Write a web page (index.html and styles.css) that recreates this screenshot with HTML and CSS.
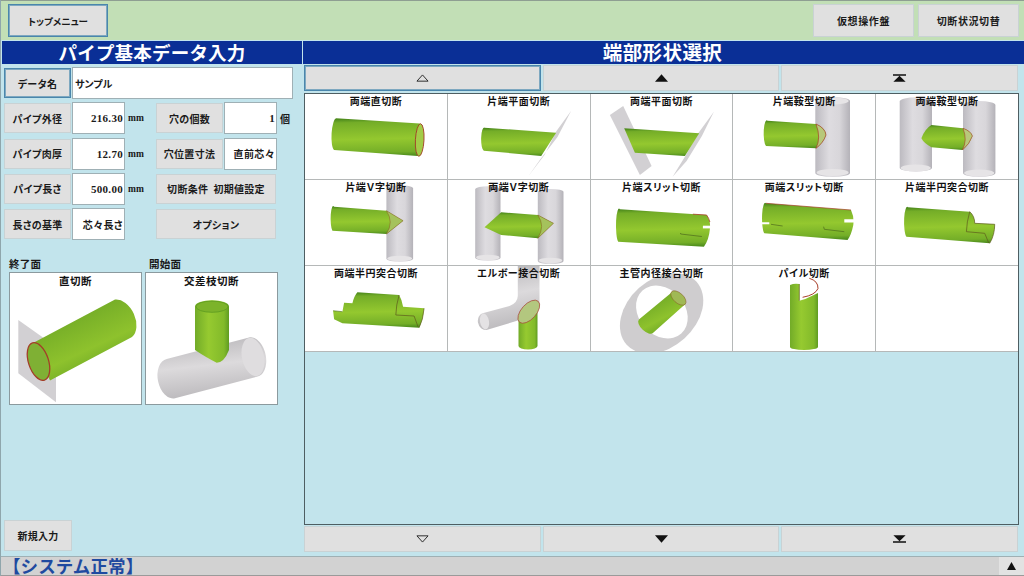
FILE: index.html
```html
<!DOCTYPE html>
<html lang="ja">
<head>
<meta charset="utf-8">
<title>パイプ基本データ入力</title>
<link rel="stylesheet" href="styles.css">
</head>
<body>
<svg class="defs" aria-hidden="true">
  <defs>
    <linearGradient id="gh" x1="0.47" y1="0" x2="0.53" y2="1">
      <stop offset="0" stop-color="#4c8a1c"/><stop offset=".1" stop-color="#74ad28"/><stop offset=".55" stop-color="#94c82f"/><stop offset=".9" stop-color="#74ae28"/><stop offset="1" stop-color="#4f8e1e"/>
    </linearGradient>
    <linearGradient id="gv" x1="0" y1="0" x2="1" y2="0">
      <stop offset="0" stop-color="#72ab28"/><stop offset=".4" stop-color="#96ca30"/><stop offset=".85" stop-color="#82ba2a"/><stop offset="1" stop-color="#5f9c22"/>
    </linearGradient>
    <linearGradient id="gd" x1="0.2" y1="0" x2="0.8" y2="1">
      <stop offset="0" stop-color="#4c8a1c"/><stop offset=".15" stop-color="#6fa826"/><stop offset=".6" stop-color="#8ec22d"/><stop offset="1" stop-color="#5a9820"/>
    </linearGradient>
    <linearGradient id="gy" x1="0" y1="0" x2="1" y2="0">
      <stop offset="0" stop-color="#bcbac0"/><stop offset=".4" stop-color="#dedce0"/><stop offset=".7" stop-color="#d8d6da"/><stop offset="1" stop-color="#b4b2b8"/>
    </linearGradient>
    <linearGradient id="gyh" x1="0.4" y1="0" x2="0.6" y2="1">
      <stop offset="0" stop-color="#bab8bb"/><stop offset=".45" stop-color="#dcdadc"/><stop offset="1" stop-color="#b8b6b9"/>
    </linearGradient>
  </defs>
</svg>

<div class="app">
  <header class="topbar">
    <button class="btn btn-focus top-menu">トップメニュー</button>
    <div class="top-right">
      <button class="btn top-btn">仮想操作盤</button>
      <button class="btn top-btn">切断状況切替</button>
    </div>
  </header>

  <main class="main">
    <section class="left">
      <h1 class="heading">パイプ基本データ入力</h1>
      <div class="form">
        <button class="btn btn-focus label">データ名</button>
        <div class="field field-name">サンプル</div>

        <button class="btn label">パイプ外径</button>
        <div class="field num">216.30</div>
        <span class="unit">mm</span>
        <button class="btn label">穴の個数</button>
        <div class="field num">1</div>
        <span class="unit unit-jp">個</span>

        <button class="btn label">パイプ肉厚</button>
        <div class="field num">12.70</div>
        <span class="unit">mm</span>
        <button class="btn label">穴位置寸法</button>
        <div class="field txt">直前芯々</div>
        <span></span>

        <button class="btn label">パイプ長さ</button>
        <div class="field num">500.00</div>
        <span class="unit">mm</span>
        <button class="btn label wide">切断条件&nbsp;&nbsp;初期値設定</button>
        <span></span>

        <button class="btn label">長さの基準</button>
        <div class="field txt">芯々長さ</div>
        <span></span>
        <button class="btn label wide">オプション</button>
        <span></span>
      </div>

      <div class="faces">
        <div class="face">
          <div class="face-label">終了面</div>
          <div class="card">
            <svg class="art" viewBox="10 273 131 131">
              <path d="M18.3 320 L56 346.7 V402.3 L18.3 373.3Z" fill="#d2d0d3"/>
              <path d="M33 343 L115 299.5 A14 21 -25 0 1 132 337 L50 380.5Z" fill="url(#gd)"/>
              <ellipse cx="38.5" cy="361.5" rx="10" ry="19.5" transform="rotate(-18 38.5 361.5)" fill="#7fb034" stroke="#a33e28" stroke-width="1.3"/>
            </svg>
            <div class="caption caption-card">直切断</div>
          </div>
        </div>
        <div class="face">
          <div class="face-label face-label-start">開始面</div>
          <div class="card">
            <svg class="art" viewBox="146 273 131 131">
              <path d="M166.7 359 L250 337.3 A12.5 20 -12 0 1 256.7 376.7 L175 398.3 A13 20 -12 0 1 166.7 359Z" fill="url(#gyh)"/>
              <ellipse cx="253" cy="357" rx="11" ry="19.5" transform="rotate(-12 253 357)" fill="#dfdddf"/>
              <path d="M195 306.7 A17 6.5 0 0 1 229 306.7 V350 Q224 362.7 216.7 362.7 Q207 358 195 350Z" fill="url(#gv)"/>
              <ellipse cx="212" cy="306.7" rx="16" ry="5.6" fill="#7cb32a" stroke="#5d9a20" stroke-width=".8"/>
            </svg>
            <div class="caption caption-card">交差枝切断</div>
          </div>
        </div>
      </div>

      <button class="btn new-entry">新規入力</button>
    </section>

    <section class="right">
      <h2 class="heading heading-right">端部形状選択</h2>
      <div class="nav">
        <button class="btn btn-focus nav-btn"><svg class="tri" viewBox="0 0 14 8"><path d="M7 .7 L13 7.4 H1Z" fill="none" stroke="#222" stroke-width="1"/></svg></button>
        <button class="btn nav-btn"><svg class="tri" viewBox="0 0 14 8"><path d="M7 0 L14 8 H0Z" fill="#111"/></svg></button>
        <button class="btn nav-btn"><svg class="tri" viewBox="0 0 14 8"><path d="M0 0 H14 V1.6 H0Z M7 1.6 L13.6 8 H.4Z" fill="#111"/></svg></button>
      </div>

      <div class="picker">
        <div class="picker-grid">
          <div class="cell">
            <svg class="art" viewBox="306 94 141.6 85">
              <path d="M337 118.3 L420.5 123.5 A4.5 16.5 3 0 1 418.5 156 L335 150 A4 16 3 0 1 337 118.3Z" fill="url(#gh)"/>
              <ellipse cx="420.6" cy="140" rx="4.3" ry="16.3" transform="rotate(3 420.6 140)" fill="#a3cc47" stroke="#a33e28" stroke-width=".9"/>
            </svg>
            <div class="caption">両端直切断</div>
          </div>
          <div class="cell">
            <svg class="art" viewBox="448.6 94 141.6 85">
              <path d="M571.7 110.7 L557 131 L545 155 L529 176 L541 159 L558 137Z" fill="#d2d0d3"/>
              <path d="M485 127.7 L556.7 132.7 L541.7 156 L484.3 150.7 A3 11.5 0 0 1 485 127.7Z" fill="url(#gh)"/>
            </svg>
            <div class="caption">片端平面切断</div>
          </div>
          <div class="cell">
            <svg class="art" viewBox="591.2 94 141.6 85">
              <path d="M610 115 L623.3 106 L651.7 166 L640 175Z" fill="#d2d0d3"/>
              <path d="M714 111.7 L698.3 133.3 L685 156.7 L672.7 176.7 L686.7 161 L702 136Z" fill="#d2d0d3"/>
              <path d="M624.3 128.3 L699.3 133.3 L685 156 L635 152.7Z" fill="url(#gh)"/>
            </svg>
            <div class="caption">両端平面切断</div>
          </div>
          <div class="cell">
            <svg class="art" viewBox="733.8 94 141.6 85">
              <path d="M816 101 A17.3 4 0 0 1 850.7 101 V173 A17.3 4 0 0 1 816 173Z" fill="url(#gy)"/>
              <ellipse cx="833.3" cy="172.5" rx="16" ry="3.6" fill="#e6e4e6"/>
              <ellipse cx="833.3" cy="101" rx="16" ry="3.4" fill="#e6e4e6"/>
              <path d="M768.3 120.7 L816.7 124 Q826 128 826.7 135 Q824 143 816.7 148.3 L766.7 146 A3 12.5 0 0 1 768.3 120.7Z" fill="url(#gh)"/>
              <path d="M816.7 124 Q826 128 826.7 135 Q824 143 816.7 148.3 Q822 138 816.7 124Z" fill="#b8c87a" stroke="#a83e28" stroke-width=".7"/>
            </svg>
            <div class="caption">片端鞍型切断</div>
          </div>
          <div class="cell">
            <svg class="art" viewBox="876.4 94 141.6 85">
              <path d="M900 101 A16.2 4 0 0 1 932.3 101 V168 A16.2 4 0 0 1 900 168Z" fill="url(#gy)"/>
              <ellipse cx="916" cy="168" rx="15" ry="3.5" fill="#e6e4e6"/>
              <path d="M963.3 105 A16.2 4 0 0 1 995.7 105 V173 A16.2 4 0 0 1 963.3 173Z" fill="url(#gy)"/>
              <ellipse cx="979.5" cy="173" rx="15" ry="3.5" fill="#e6e4e6"/>
              <path d="M931.7 125 L963.3 128.3 Q971 131 972.7 136 Q970 144 962.7 150 L931.7 147.3 Q924 143 921.7 138.3 Q925 129 931.7 125Z" fill="url(#gh)"/>
              <path d="M963.3 128.3 Q971 131 972.7 136 Q970 144 962.7 150 Q968 140 963.3 128.3Z" fill="#b8c87a" stroke="#a83e28" stroke-width=".6"/>
            </svg>
            <div class="caption">両端鞍型切断</div>
          </div>

          <div class="cell">
            <svg class="art" viewBox="306 180 141.6 85">
              <path d="M387.3 188 A13.4 3 0 0 1 414 188 V259 A13.4 3 0 0 1 387.3 259Z" fill="url(#gy)"/>
              <ellipse cx="400.6" cy="258.5" rx="12.5" ry="2.8" fill="#e6e4e6"/>
              <path d="M335 206.7 L387.3 210.7 L404 220.7 L387.3 234 L333.3 230.7 A2.5 12 0 0 1 335 206.7Z" fill="url(#gh)"/>
              <path d="M387.3 210.7 L404 220.7 L387.3 234 Q395 222 387.3 210.7Z" fill="#a5c25c" stroke="#8a5a24" stroke-width=".5"/>
            </svg>
            <div class="caption">片端Ｖ字切断</div>
          </div>
          <div class="cell">
            <svg class="art" viewBox="448.6 180 141.6 85">
              <path d="M475.7 189 A12.7 3 0 0 1 501 189 V258 A12.7 3 0 0 1 475.7 258Z" fill="url(#gy)"/>
              <ellipse cx="488.3" cy="257.5" rx="11.8" ry="2.7" fill="#e6e4e6"/>
              <path d="M538.3 192 A12.8 3 0 0 1 564 192 V261 A12.8 3 0 0 1 538.3 261Z" fill="url(#gy)"/>
              <ellipse cx="551" cy="260.5" rx="11.8" ry="2.7" fill="#e6e4e6"/>
              <path d="M485 227.3 L501.7 212.3 L538.3 215 L554 223.3 L538.3 238.3 L501.7 235Z" fill="url(#gh)"/>
              <path d="M538.3 215 L554 223.3 L538.3 238.3 Q546 226 538.3 215Z" fill="#a5c25c" stroke="#8a5a24" stroke-width=".5"/>
            </svg>
            <div class="caption">両端Ｖ字切断</div>
          </div>
          <div class="cell">
            <svg class="art" viewBox="591.2 180 141.6 85">
              <path d="M620 209.3 L706.7 215 Q711 221 710 229 Q709 240 704 246.7 L618.3 241.7 A3 16.5 0 0 1 620 209.3Z" fill="url(#gh)"/>
              <path d="M680.7 233 V234 L702 236.5" fill="none" stroke="#4d6a1c" stroke-width=".7"/>
              <path d="M693 214.2 L706.7 215 Q709 218 710 222" fill="none" stroke="#a83e28" stroke-width=".8"/>
              <path d="M703 225.7 H712 V228.4 H703Z" fill="#fff"/>
            </svg>
            <div class="caption">片端スリット切断</div>
          </div>
          <div class="cell">
            <svg class="art" viewBox="733.8 180 141.6 85">
              <path d="M766.7 203.3 L851.7 210 Q855 217 854 225 Q852 235 848.3 240 L765 233.3 A3 15 0 0 1 766.7 203.3Z" fill="url(#gh)"/>
              <path d="M766.7 203.3 L851.7 210" fill="none" stroke="#a83e28" stroke-width=".7"/>
              <path d="M771.7 224.3 L783.3 226 M824.3 226.7 L825 229.3 L845 231.7" fill="none" stroke="#4d6a1c" stroke-width=".7"/>
              <path d="M762 222.3 H770 V224.3 H762Z M845 219.3 H855 V222.6 H845Z" fill="#fff"/>
            </svg>
            <div class="caption">両端スリット切断</div>
          </div>
          <div class="cell">
            <svg class="art" viewBox="876.4 180 141.6 85">
              <path d="M908.3 207.3 L970 211.7 Q975 216 975 223.3 L995 224.3 Q995 235 990 243.3 L906.7 236.7 A3 14.5 0 0 1 908.3 207.3Z" fill="url(#gh)"/>
              <path d="M970 211.7 Q975 216 975 223.3 L995 224.3 Q995 235 990 243.3 M970 211.7 Q967 222 966.7 231.7 L985 233.3 L989 243" fill="none" stroke="#5d5a1c" stroke-width=".7"/>
            </svg>
            <div class="caption">片端半円突合切断</div>
          </div>

          <div class="cell">
            <svg class="art" viewBox="306 266 141.6 85">
              <path d="M334 310.7 L343.3 311.7 L345 302.7 L353.3 303.3 Q355 296 358.3 292.3 L400 295 Q403 300 404 306.7 L425 308.3 Q424 320 420 327.7 L343.3 323.3 L335 319.3Z" fill="url(#gh)"/>
              <path d="M400 295 Q397 305 396.7 315 L415 316 L419 327 M425 308.3 Q424 320 420 327.7" fill="none" stroke="#5d5a1c" stroke-width=".7"/>
              <path d="M334 310.7 L343.3 311.7" stroke="#4d6a1c" stroke-width=".6" fill="none"/>
            </svg>
            <div class="caption">両端半円突合切断</div>
          </div>
          <div class="cell">
            <svg class="art" viewBox="448.6 266 141.6 85">
              <path d="M518.3 266 V296 Q518 303 510 306 L484 313 A7 8.5 -12 0 0 487 330 L520 320 L540 304 V266Z" fill="url(#gyh)"/>
              <ellipse cx="485" cy="321.5" rx="4.5" ry="8" transform="rotate(-10 485 321.5)" fill="#e4e2e4"/>
              <path d="M519 318 L538 302 V346 A9.5 3.5 0 0 1 519 346Z" fill="url(#gv)"/>
              <ellipse cx="529.3" cy="311.7" rx="14" ry="7.5" transform="rotate(-48 529.3 311.7)" fill="#b3c77f" stroke="#a8483a" stroke-width=".7"/>
            </svg>
            <div class="caption">エルボー接合切断</div>
          </div>
          <div class="cell">
            <svg class="art" viewBox="591.2 266 141.6 85">
              <ellipse cx="661.7" cy="313.3" rx="47" ry="34" transform="rotate(-42 661.7 313.3)" fill="#cfcdcf"/>
              <ellipse cx="662" cy="312" rx="29" ry="23" transform="rotate(48 662 312)" fill="#fff"/>
              <path d="M672 292.3 L639 319.5 A9.7 5 43 0 0 653.3 332.7 L685.5 304Z" fill="url(#gd)"/>
              <ellipse cx="678.5" cy="298" rx="5" ry="9.2" transform="rotate(-48 678.5 298)" fill="#a0b955" stroke="#8a6a2a" stroke-width=".6"/>
            </svg>
            <div class="caption">主管内径接合切断</div>
          </div>
          <div class="cell">
            <svg class="art" viewBox="733.8 266 141.6 85">
              <path d="M790.7 285 Q795 283 800 284 V300.7 L806 299 L818.7 293 V347 A14 3 0 0 1 790.7 347Z" fill="url(#gv)"/>
              <path d="M810 278.3 Q819 281 818.7 288.5 Q816 295 803.3 297.3" fill="none" stroke="#a83e28" stroke-width="1"/>
              <path d="M800 284 V300.7" fill="none" stroke="#5d5a1c" stroke-width=".7"/>
            </svg>
            <div class="caption">パイル切断</div>
          </div>
          <div class="cell"></div>
        </div>
      </div>

      <div class="nav">
        <button class="btn nav-btn"><svg class="tri" viewBox="0 0 14 8"><path d="M7 7.3 L13 .6 H1Z" fill="none" stroke="#222" stroke-width="1"/></svg></button>
        <button class="btn nav-btn"><svg class="tri" viewBox="0 0 14 8"><path d="M7 8 L14 0 H0Z" fill="#111"/></svg></button>
        <button class="btn nav-btn"><svg class="tri" viewBox="0 0 14 8"><path d="M.4 0 H13.6 L7 6.4Z M0 6.4 H14 V8 H0Z" fill="#111"/></svg></button>
      </div>
    </section>
  </main>

  <footer class="status">
    <span class="status-text">【システム正常】</span>
    <span class="status-btn"><svg class="tri-small" viewBox="0 0 9 8"><path d="M4.5 0 L9 8 H0Z" fill="#111"/></svg></span>
  </footer>
</div>
</body>
</html>
```
FILE: styles.css
```css
* { box-sizing: border-box; }
html, body { margin: 0; padding: 0; }
body {
  width: 1024px;
  height: 576px;
  overflow: hidden;
  background: #c2e4ec;
  font-family: "Noto Sans CJK JP", "Noto Sans", sans-serif;
  font-weight: 700;
  color: #1a1a1a;
}
.defs { width: 0; height: 0; display: block; overflow: hidden; }
.app { width: 1024px; height: 576px; display: flex; flex-direction: column; border-left: 1px solid #8fa6ac; }

.btn {
  font: inherit;
  color: inherit;
  font-size: 10px;
  font-feature-settings: "palt";
  letter-spacing: .3px;
  padding: 0;
  background: #e0e0e0;
  border: 1px solid #c9d2d4;
  border-radius: 0;
  display: flex;
  align-items: center;
  justify-content: center;
}
.btn-focus { border: 1px solid #4a86ac; box-shadow: inset 0 0 0 1px #7ea8c0; }

.topbar {
  height: 40px;
  flex: none;
  background: #c2dfb6;
  border-top: 1px solid #8e9e92;
  display: flex;
  justify-content: space-between;
  padding: 3px 5px 3px 7px;
}
.top-menu { width: 100px; height: 33px; font-size: 9.5px; letter-spacing: 0; }
.top-right { display: flex; gap: 4px; }
.top-btn { width: 101px; height: 33px; font-size: 10px; letter-spacing: .6px; }

.main { flex: 1; display: flex; min-height: 0; }
.left { width: 302px; flex: none; padding: 1px 1px 5px 1px; display: flex; flex-direction: column; }
.right { flex: 1; padding: 1px 0 3px; display: flex; flex-direction: column; }

.heading {
  margin: 0;
  height: 23px;
  flex: none;
  background: #0a2f96;
  color: #fff;
  font-size: 18.5px;
  line-height: 22px;
  font-weight: 700;
  text-align: center;
  letter-spacing: .2px;
}
.heading-right { font-size: 19.5px; letter-spacing: .4px; padding-right: 2px; }

.form {
  margin-top: 3px;
  padding-left: 2px;
  display: grid;
  grid-template-columns: 68px 53px 31px 68px 53px 16px;
  grid-auto-rows: 32px;
  row-gap: 3.3px;
}
.label { margin: 1px 1px 1px 0; }
.wide { grid-column: span 2; }
.field {
  background: #fff;
  border: 1px solid #9fb0b5;
  font-size: 10px;
  font-feature-settings: "palt";
  display: flex;
  align-items: center;
  padding: 0 2px;
}
.field-name { grid-column: span 5; padding-left: 2px; }
.num {
  justify-content: flex-end;
  font-family: "Liberation Serif", serif;
  font-size: 11px;
  letter-spacing: .3px;
  padding-right: 1px;
}
.txt { justify-content: flex-end; padding-right: 1px; letter-spacing: .4px; }
.unit {
  font-family: "Liberation Serif", serif;
  font-size: 9.5px;
  display: flex;
  align-items: center;
  padding-left: 3px;
}
.unit-jp { font-family: inherit; font-size: 10px; }

.faces { margin-top: 15px; margin-left: 7px; display: flex; gap: 3px; }
.face { width: 133px; display: flex; flex-direction: column; }
.face-label { font-size: 10.5px; line-height: 17px; letter-spacing: .2px; }
.face-label-start { padding-left: 4px; }
.card {
  width: 133px;
  height: 133px;
  background: #fff;
  border: 1px solid #8b9a9e;
  display: grid;
}
.card > *, .cell > * { grid-area: 1 / 1; min-width: 0; min-height: 0; }
.art { width: 100%; height: 100%; display: block; }

.caption {
  align-self: start;
  text-align: center;
  font-size: 10px;
  font-feature-settings: "palt";
  line-height: 14px;
  letter-spacing: .5px;
  color: #111;
}
.caption-card { font-size: 10.5px; line-height: 16px; }

.new-entry { width: 68px; height: 31px; margin-top: auto; margin-left: 2px; }

.nav { height: 27px; flex: none; margin: 1px 0 0 1px; width: 714px; display: flex; gap: 2px; }
.nav-btn { flex: 1; height: 26px; }
.tri { width: 13px; height: 8px; display: block; }

.picker {
  flex: 1;
  width: 715px;
  margin: 1px 0 0 1px;
  border: 1px solid #4e5e62;
  min-height: 0;
}
.picker-grid {
  background: #b5b8b8;
  display: grid;
  grid-template-columns: repeat(5, 1fr);
  grid-auto-rows: 85px;
  gap: 1px;
  padding-bottom: 1px;
}
.cell { background: #fff; display: grid; overflow: hidden; }

.status {
  height: 20px;
  flex: none;
  background: #d2d2d2;
  border-top: 1px solid #9fb0b4;
  border-bottom: 1px solid #9a9a9a;
  display: flex;
  justify-content: space-between;
  align-items: stretch;
}
.status-text { color: #1f4aa0; font-size: 17.5px; line-height: 18px; letter-spacing: .1px; padding-left: 2px; }
.status-btn { width: 25px; background: #e2e2e2; display: flex; align-items: center; justify-content: center; }
.tri-small { width: 9px; height: 8px; display: block; }
```
